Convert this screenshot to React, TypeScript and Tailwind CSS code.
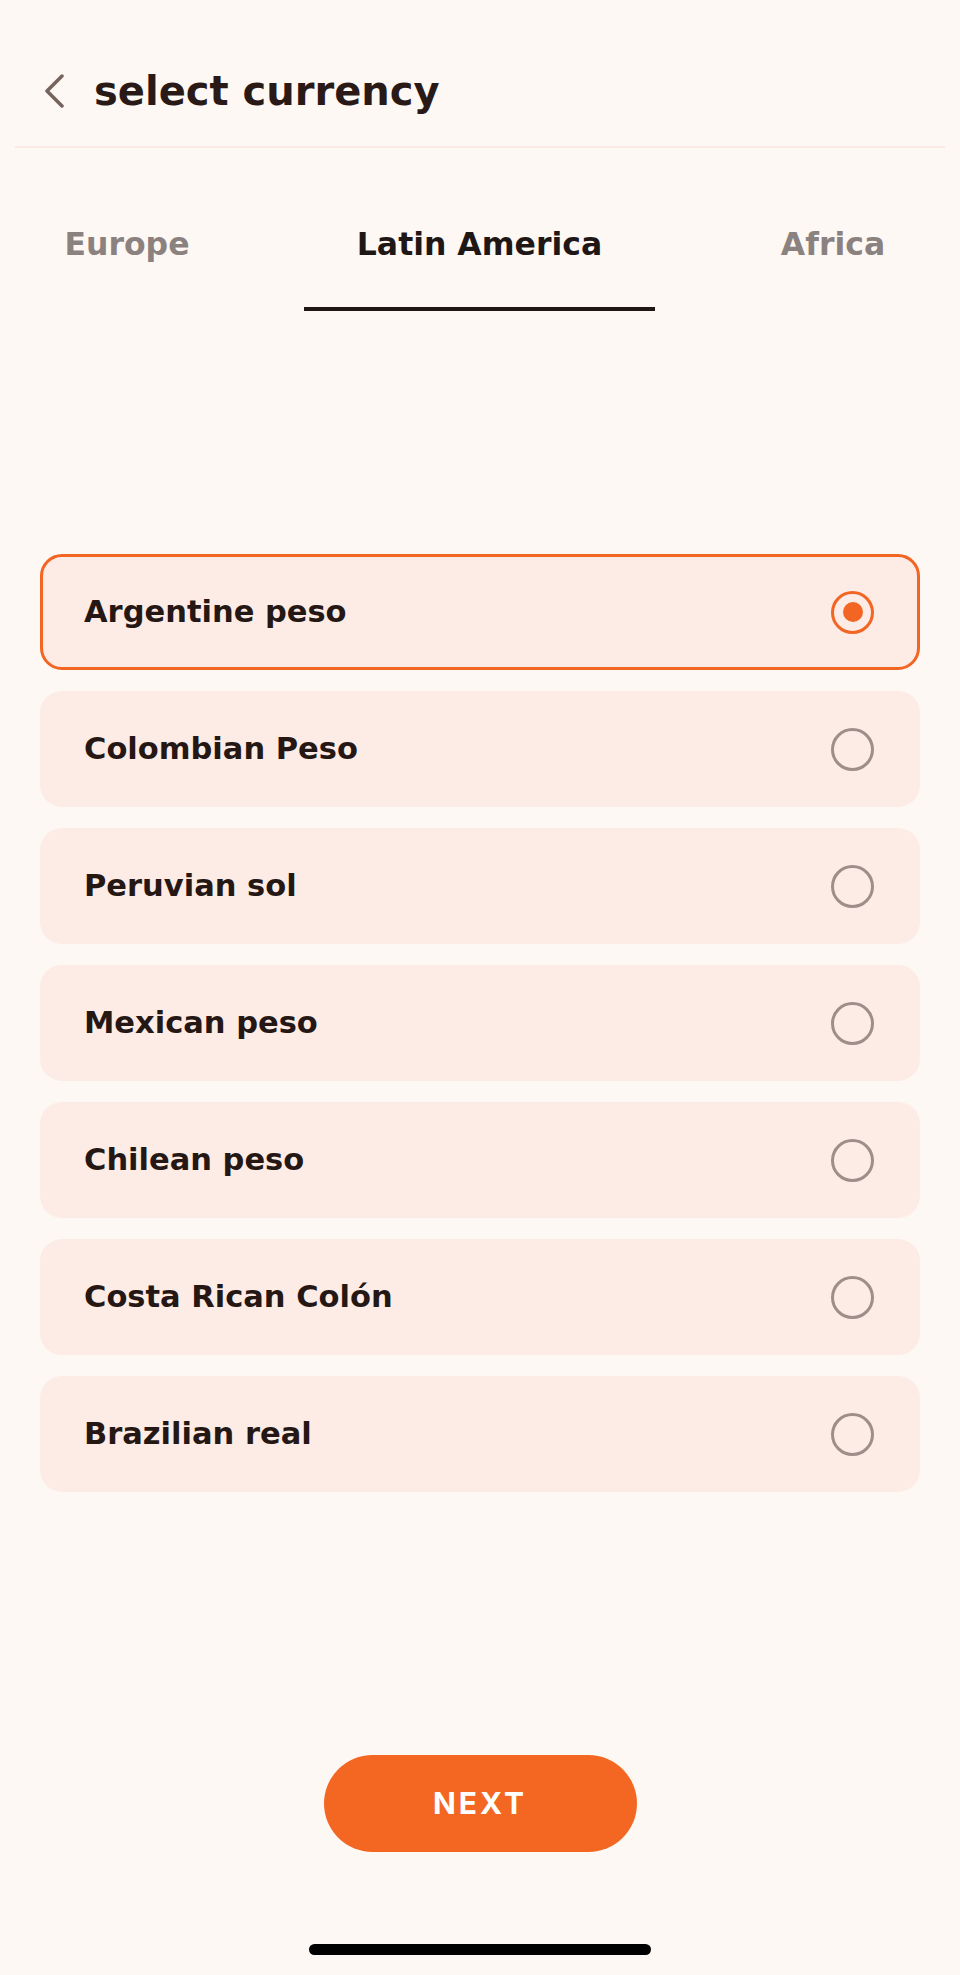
import React from "react";

const items = [
  "Argentine peso",
  "Colombian Peso",
  "Peruvian sol",
  "Mexican peso",
  "Chilean peso",
  "Costa Rican Colón",
  "Brazilian real",
];

export default function App() {
  const font = { fontFamily: "'DejaVu Sans', 'Noto Sans', sans-serif" };
  return (
    <div
      className="w-[960px] h-[1975px] bg-[#fdf8f4] flex flex-col overflow-hidden"
      style={font}
    >
      {/* Header */}
      <div className="flex items-center h-[70px] mt-[56px] pl-[44px]">
        <svg width="21" height="34" viewBox="0 0 21 34" className="shrink-0">
          <path
            d="M18 2 L3 17 L18 32"
            fill="none"
            stroke="#76635e"
            strokeWidth="3.5"
            strokeLinecap="round"
            strokeLinejoin="round"
          />
        </svg>
        <div className="ml-[29px] text-[40px] font-bold text-[#2a1a17] leading-none">
          select currency
        </div>
      </div>
      <div className="mt-[20px] mx-[15px] h-[2px] bg-[#fbeae4]" />

      {/* Tabs */}
      <div className="flex mt-[76px] pl-[11px]">
        <div className="w-[232px] flex flex-col items-center">
          <div className="h-[40px] leading-[40px] text-[31.5px] font-bold text-[#8b8280]">
            Europe
          </div>
          <div className="mt-[43px] h-[4px] w-full bg-transparent" />
        </div>
        <div className="ml-[61px] w-[351px] flex flex-col items-center">
          <div className="h-[40px] leading-[40px] text-[31.5px] font-bold text-[#1f1715]">
            Latin America
          </div>
          <div className="mt-[43px] h-[4px] w-full bg-[#1f1715]" />
        </div>
        <div className="ml-[72px] w-[212px] flex flex-col items-center">
          <div className="h-[40px] leading-[40px] text-[31.5px] font-bold text-[#8b8280]">
            Africa
          </div>
          <div className="mt-[43px] h-[4px] w-full bg-transparent" />
        </div>
      </div>

      {/* List */}
      <div className="mt-[243px] mx-[40px] flex flex-col gap-[21px]">
        {items.map((name, i) => {
          const selected = i === 0;
          return (
            <div
              key={name}
              className={
                selected
                  ? "h-[116px] rounded-[22px] bg-[#fdebe5] border-[3px] border-[#f26522] flex items-center justify-between pl-[41px] pr-[43px]"
                  : "h-[116px] rounded-[22px] bg-[#fdebe5] flex items-center justify-between pl-[44px] pr-[46px]"
              }
            >
              <span className="text-[30.5px] font-bold text-[#241714]">
                {name}
              </span>
              {selected ? (
                <div className="w-[43px] h-[43px] rounded-full border-[3.5px] border-[#f26522] flex items-center justify-center">
                  <div className="w-[20px] h-[20px] rounded-full bg-[#f26522]" />
                </div>
              ) : (
                <div className="w-[43px] h-[43px] rounded-full border-[3.5px] border-[#9e8e89]" />
              )}
            </div>
          );
        })}
      </div>

      {/* Next button */}
      <div className="mt-[263px] flex justify-center">
        <button
          className="w-[313px] h-[97px] rounded-full bg-[#f46722] text-white text-[30px] font-bold tracking-[3px]"
          style={{ fontFamily: "Inter, 'Liberation Sans', sans-serif" }}
        >
          NEXT
        </button>
      </div>

      {/* Home indicator */}
      <div className="mt-[92px] flex justify-center">
        <div className="w-[342px] h-[11px] rounded-full bg-black" />
      </div>
    </div>
  );
}
